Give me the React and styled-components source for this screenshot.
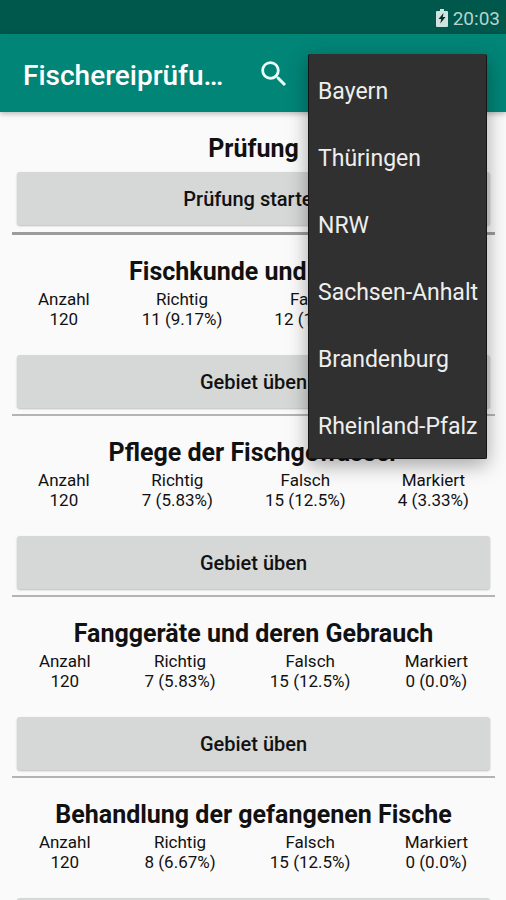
import React from 'react';
import styled, { createGlobalStyle } from 'styled-components';
import { MdSearch } from 'react-icons/md';

const states = ['Bayern', 'Thüringen', 'NRW', 'Sachsen-Anhalt', 'Brandenburg', 'Rheinland-Pfalz'];

const areas = [
  { title: 'Fischkunde und -hege', total: '120', right: '11 (9.17%)', wrong: '12 (10.0%)', marked: '0 (0.0%)' },
  { title: 'Pflege der Fischgewässer', total: '120', right: '7 (5.83%)', wrong: '15 (12.5%)', marked: '4 (3.33%)' },
  { title: 'Fanggeräte und deren Gebrauch', total: '120', right: '7 (5.83%)', wrong: '15 (12.5%)', marked: '0 (0.0%)' },
  { title: 'Behandlung der gefangenen Fische', total: '120', right: '8 (6.67%)', wrong: '15 (12.5%)', marked: '0 (0.0%)' },
];

const BatteryIcon = () => (
  <svg width="12" height="18" viewBox="0 0 12 18" aria-hidden="true">
    <path d="M4 0h4v2h3q1 0 1 1v14q0 1-1 1H1q-1 0-1-1V3q0-1 1-1h3z" fill="#cfe3e0" />
    <path d="M7.500 4L2.500 10H5.200L4.300 14.500L9.500 8H6.800z" fill="#0b2f2a" />
  </svg>
);

const Area = ({ area }) => (
  <Section>
    <Title>{area.title}</Title>
    <Stats>
      <thead>
        <tr>
          <th scope="col">Anzahl</th>
          <th scope="col">Richtig</th>
          <th scope="col">Falsch</th>
          <th scope="col">Markiert</th>
        </tr>
      </thead>
      <tbody>
        <tr>
          <td>{area.total}</td>
          <td>{area.right}</td>
          <td>{area.wrong}</td>
          <td>{area.marked}</td>
        </tr>
      </tbody>
    </Stats>
    <ActionButton type="button">Gebiet üben</ActionButton>
  </Section>
);

const App = () => (
  <Screen>
    <GlobalStyle />
    <StatusBar>
      <BatteryIcon />
      <span>20:03</span>
    </StatusBar>
    <Toolbar>
      <AppTitle>Fischereiprüfung Trainer</AppTitle>
      <IconButton type="button" aria-label="Suchen">
        <MdSearch size={34} />
      </IconButton>
    </Toolbar>
    <Menu role="menu">
      {states.map(state => (
        <MenuItem key={state} type="button" role="menuitem">{state}</MenuItem>
      ))}
    </Menu>
    <Content>
      <Section $thick>
        <Title>Prüfung</Title>
        <ActionButton type="button" $near>Prüfung starten</ActionButton>
      </Section>
      {areas.map(area => (
        <Area key={area.title} area={area} />
      ))}
    </Content>
  </Screen>
);

const GlobalStyle = createGlobalStyle`
  html {
    scrollbar-width: none;
  }

  body {
    margin: 0;
    background: #fafafa;
  }

  * {
    box-sizing: border-box;
  }

  button {
    font-family: inherit;
    border: 0;
    cursor: pointer;
  }
`;

const Screen = styled.div`
  position: relative;
  min-height: 100vh;
  color: #111;
  font-family: Roboto, sans-serif;
`;

const StatusBar = styled.div`
  display: flex;
  align-items: center;
  justify-content: flex-end;
  gap: 5px;
  height: 34px;
  padding: 2px 6px 0 0;
  background: #00574b;
  color: #b5d3cf;
  font-size: 19px;
`;

const Toolbar = styled.header`
  display: flex;
  align-items: center;
  height: 78px;
  padding: 6px 215px 0 23px;
  background: #008577;
  box-shadow: 0 2px 5px rgba(0, 0, 0, .25);
  color: #fff;
`;

const AppTitle = styled.h1`
  flex: 1;
  min-width: 0;
  margin: 0 29px 0 0;
  font-size: 28px;
  font-weight: 500;
  line-height: 36px;
  white-space: nowrap;
  overflow: hidden;
  text-overflow: ellipsis;
`;

const IconButton = styled.button`
  display: flex;
  margin-bottom: 4px;
  padding: 0;
  background: none;
  color: #e8fffc;
`;

const Menu = styled.div`
  position: absolute;
  top: 54px;
  right: 19px;
  display: flex;
  flex-direction: column;
  width: 179px;
  height: 405px;
  border: 1px solid #161616;
  border-top-color: #303030;
  border-radius: 2px;
  background: #303030;
  box-shadow: 0 6px 20px rgba(0, 0, 0, .35);
`;

const MenuItem = styled.button`
  flex: 1;
  padding: 5px 0 0 9px;
  background: none;
  color: #eee;
  font-size: 23px;
  text-align: left;
  white-space: nowrap;
`;

const Content = styled.main`
  padding: 0 11px 0 12px;
`;

const Section = styled.section`
  display: flex;
  flex-direction: column;
  padding: 22px 0 ${props => (props.$thick ? 7 : 6)}px;
  border-bottom: ${props => (props.$thick ? '3px solid #9c9c9c' : '2px solid #b4b4b4')};
`;

const Title = styled.h2`
  margin: 0;
  font-size: 25px;
  font-weight: 700;
  line-height: 30px;
  text-align: center;
  white-space: nowrap;
`;

const Stats = styled.table`
  width: 100%;
  margin-top: 2px;
  border-collapse: collapse;
  font-size: 17px;
  line-height: 20px;
  text-align: center;

  th,
  td {
    padding: 0 26px;
    font-weight: 400;
    white-space: nowrap;
  }
`;

const ActionButton = styled.button`
  height: 53px;
  margin: ${props => (props.$near ? 8 : 26)}px 5px 0;
  border-radius: 3px;
  background: #d6d7d7;
  box-shadow: 0 1px 2px rgba(0, 0, 0, .25);
  color: #111;
  font-size: 20px;
  font-weight: 500;
`;

export default App;
